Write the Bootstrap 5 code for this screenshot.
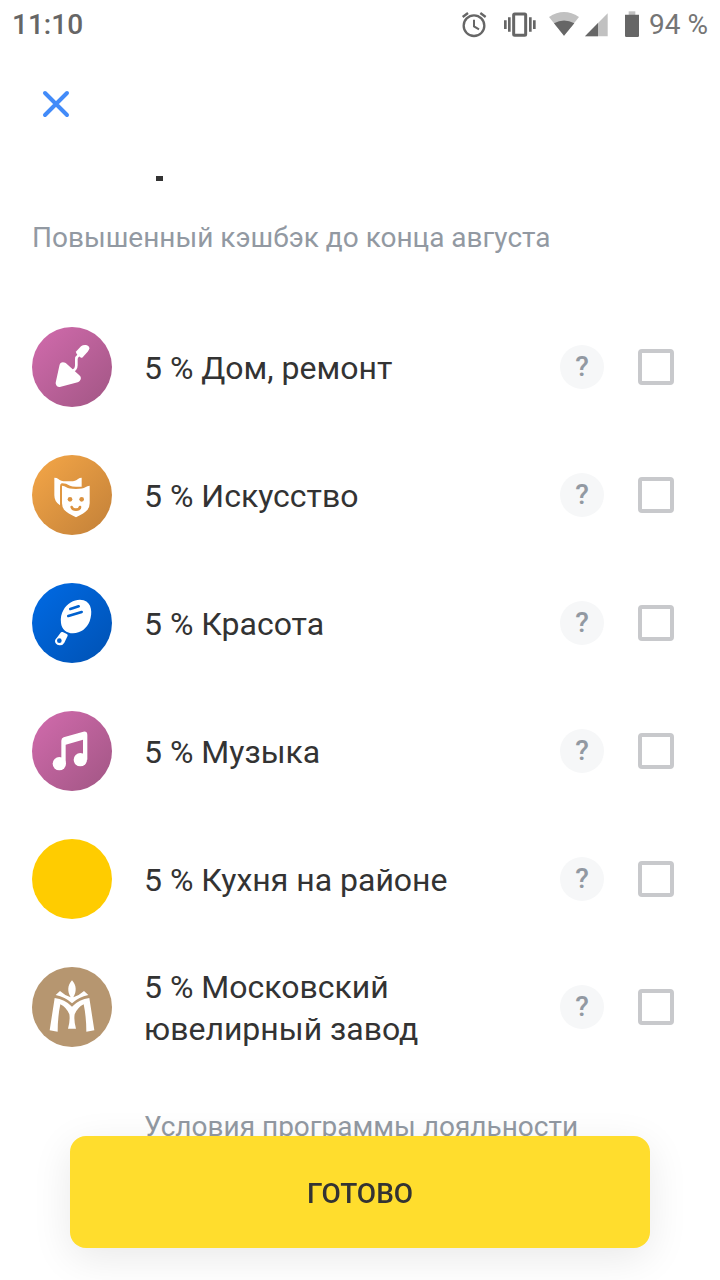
<!DOCTYPE html>
<html lang="ru">
<head>
<meta charset="utf-8">
<meta name="viewport" content="width=device-width, initial-scale=1">
<title>Повышенный кэшбэк</title>
<link href="https://cdn.jsdelivr.net/npm/bootstrap@5.3.0/dist/css/bootstrap.min.css" rel="stylesheet">
<style>
  body { font-family: Roboto, "Noto Sans", sans-serif; color: #333; background: #fff; }
  svg { display: block; flex: none; }
  .statusbar { height: 50px; padding: 0 12px; font-size: 28px; line-height: 32px; font-weight: 500; color: #666; }
  .statusbar .battery-level { font-weight: 400; color: #757575; margin-left: 8px; }
  .toolbar { height: 108px; padding: 0 32px; }
  .btn-dismiss { width: 48px; height: 48px; padding: 0; border: 0; background: none; }
  .title-strip { height: 58px; padding: 18px 156px; }
  .title-tail { width: 7px; height: 5px; background: #333; }
  .muted { color: #9299a2; font-size: 28px; line-height: 44px; }
  .offers { padding-top: 43px; }
  .offer { height: 128px; padding: 0 46px 0 32px; }
  .offer-name { font-size: 32px; line-height: 42px; margin-left: 32px; padding-top: 2px; }
  .btn-help { width: 44px; height: 44px; padding: 0; border: 0; border-radius: 50%; background: #f6f7f8; color: #9299a2; font-size: 28px; line-height: 44px; font-weight: 500; margin-right: 34px; }
  .offer .form-check-input { width: 36px; height: 36px; margin: 0; border: 4px solid #c8c9cc; border-radius: 4px; flex: none; }
  .terms { padding: 34px 32px 130px 144px; }
  .done-bar { padding: 0 70px 32px; }
  .btn-done { height: 112px; padding: 4px 0 0; border: 0; border-radius: 16px; background: #ffdd2d; color: #333; font-size: 28px; font-weight: 500; box-shadow: 0 10px 40px rgba(0,0,0,.09); }
  .btn-done:hover { background: #fcc521; }
</style>
</head>
<body>
<svg width="0" height="0" class="position-absolute" aria-hidden="true">
  <defs>
    <linearGradient id="pink" x1="0" y1="0" x2="1" y2="1"><stop offset=".1" stop-color="#cd69a9"/><stop offset=".9" stop-color="#a65888"/></linearGradient>
    <linearGradient id="orange" x1="0" y1="0" x2="1" y2="1"><stop offset=".1" stop-color="#f0a346"/><stop offset=".9" stop-color="#c7843a"/></linearGradient>
    <linearGradient id="blue" x1="0" y1="0" x2="1" y2="1"><stop offset=".1" stop-color="#0068e0"/><stop offset=".9" stop-color="#0054b8"/></linearGradient>
  </defs>
</svg>

<header>
  <div class="statusbar d-flex align-items-center">
    <span class="me-auto">11:10</span>
    <svg width="28" height="28" viewBox="30 32 84 84" fill="none" stroke="#666" stroke-width="7" aria-hidden="true"><circle cx="72" cy="76" r="31"/><path d="M72 58V78L87 87" stroke-width="6"/><path d="M38 50L54 38M91 38L107 50" stroke-width="7"/></svg>
    <svg class="ms-3" width="36" height="28" viewBox="162 32 108 84" fill="none" stroke="#666" stroke-width="8" aria-hidden="true"><rect x="191" y="41" width="36" height="64" rx="3" stroke-width="9"/><path d="M178 51V94M166 60V86M241 51V94M253 60V86"/></svg>
    <svg class="ms-2" width="32" height="28" viewBox="297 32 96 84" aria-hidden="true"><path d="M300 50Q345 20 390 50L345 106Z" fill="#c1c1c1"/><path d="M315 69Q345 52 376 69L345 106Z" fill="#666"/></svg>
    <svg class="ms-1" width="25" height="28" viewBox="405 32 75 84" aria-hidden="true"><path d="M408 108L476 39V108Z" fill="#c1c1c1"/><path d="M408 108L447 68V108Z" fill="#666"/></svg>
    <svg class="ms-2" width="24" height="28" viewBox="501 32 72 84" aria-hidden="true"><path d="M536 33H556V44H536Z" fill="#c1c1c1"/><path d="M525 43H567V106Q567 110 563 110H529Q525 110 525 106Z" fill="#666"/></svg>
    <span class="battery-level">94 %</span>
  </div>
  <div class="toolbar d-flex align-items-center">
    <button type="button" class="btn-dismiss d-flex align-items-center justify-content-center" aria-label="Закрыть">
      <svg width="28" height="28" viewBox="0 0 28 28" stroke="#428bf9" stroke-width="4" stroke-linecap="round"><path d="M3 3L25 25M25 3L3 25"/></svg>
    </button>
  </div>
  <div class="title-strip"><div class="title-tail"></div></div>
</header>

<main>
  <p class="muted m-0 px-4 mx-2">Повышенный кэшбэк до конца августа</p>
  <ul class="offers list-unstyled m-0">
    <li class="offer d-flex align-items-center">
      <svg width="80" height="80" viewBox="30 30 240 240" aria-hidden="true"><circle cx="150" cy="150" r="120" fill="url(#pink)"/><path d="M124 148L164 184L113 198Z" fill="#fff" stroke="#fff" stroke-width="24" stroke-linejoin="round"/><path d="M147 166L159 157Q163 153 163 145V127Q163 120 169 116L176 109" fill="none" stroke="#fff" stroke-width="8"/><path d="M163 103L177 88Q183 83 192 84Q202 86 202 94Q202 98 197 104L182 121Q179 124 175 121L165 112Q160 107 163 103Z" fill="#fff"/></svg>
      <label class="offer-name me-auto" for="offer1">5 % Дом, ремонт</label>
      <button type="button" class="btn-help" aria-label="Подробнее: Дом, ремонт">?</button>
      <input class="form-check-input" type="checkbox" id="offer1">
    </li>
    <li class="offer d-flex align-items-center">
      <svg width="80" height="80" viewBox="30 30 240 240" aria-hidden="true"><circle cx="150" cy="150" r="120" fill="url(#orange)"/><path d="M97 98Q105 98 109 102Q116 109 131 109H146Q161 109 168 102Q173 98 179 98V125H162Q150 125 144 122Q130 114 119 115Q114 116 114 125V181Q97 171 97 151Z" fill="#fff"/><path d="M120 122Q128 122 133 127Q140 132 162 132Q183 132 190 127Q196 122 203 122V175Q203 188 195 196Q188 205 162 217Q136 205 128 196Q120 188 120 175Z" fill="#fff"/><g fill="#db923f"><circle cx="144" cy="163" r="7"/><circle cx="179" cy="163" r="7"/></g><path d="M149 186Q151 194 162 194Q173 194 174 186" fill="none" stroke="#db923f" stroke-width="8" stroke-linecap="round"/></svg>
      <label class="offer-name me-auto" for="offer2">5 % Искусство</label>
      <button type="button" class="btn-help" aria-label="Подробнее: Искусство">?</button>
      <input class="form-check-input" type="checkbox" id="offer2">
    </li>
    <li class="offer d-flex align-items-center">
      <svg width="80" height="80" viewBox="30 30 240 240" aria-hidden="true"><circle cx="150" cy="150" r="120" fill="url(#blue)"/><path d="M124 112C137 87 165 76 185 82C210 90 212 120 203 145C195 166 176 181 153 181C133 181 119 168 117 150C115 135 118 122 124 112Z" fill="#fff"/><path d="M145 108L170 100M139 129L179 117" stroke="#0061cf" stroke-width="8" stroke-linecap="round"/><path d="M117 178Q119 176 122 177L133 182Q138 184 137 188L127 209Q122 218 112 217Q98 213 99 203Q100 199 104 195Z" fill="#fff"/><circle cx="112" cy="203" r="7" fill="#0061cf"/></svg>
      <label class="offer-name me-auto" for="offer3">5 % Красота</label>
      <button type="button" class="btn-help" aria-label="Подробнее: Красота">?</button>
      <input class="form-check-input" type="checkbox" id="offer3">
    </li>
    <li class="offer d-flex align-items-center">
      <svg width="80" height="80" viewBox="30 30 240 240" aria-hidden="true"><circle cx="150" cy="150" r="120" fill="url(#pink)"/><circle cx="112" cy="188" r="20" fill="#fff"/><circle cx="175" cy="176" r="20" fill="#fff"/><path d="M118 188V119Q118 111 125 109L184 92Q196 90 196 102V176H183V116L131 131V188Z" fill="#fff"/></svg>
      <label class="offer-name me-auto" for="offer4">5 % Музыка</label>
      <button type="button" class="btn-help" aria-label="Подробнее: Музыка">?</button>
      <input class="form-check-input" type="checkbox" id="offer4">
    </li>
    <li class="offer d-flex align-items-center">
      <svg width="80" height="80" viewBox="30 30 240 240" aria-hidden="true"><circle cx="150" cy="150" r="120" fill="#ffcc00"/></svg>
      <label class="offer-name me-auto" for="offer5">5 % Кухня на районе</label>
      <button type="button" class="btn-help" aria-label="Подробнее: Кухня на районе">?</button>
      <input class="form-check-input" type="checkbox" id="offer5">
    </li>
    <li class="offer d-flex align-items-center">
      <svg width="80" height="80" viewBox="30 30 240 240" aria-hidden="true"><circle cx="150" cy="150" r="120" fill="#b69670"/><g fill="#fff"><path d="M150 70C164 85 164 104 154 121Q172 115 186 102L199 114Q171 119 150 139Q129 119 101 114L114 102Q128 115 146 121C136 104 136 85 150 70Z"/><path d="M98 123Q128 126 150 149Q172 126 202 123L217 220L193 224Q193 180 185 142Q166 152 158 172Q155 190 162 215H138Q145 190 142 172Q134 152 115 142Q107 180 107 224L83 220Z"/></g></svg>
      <label class="offer-name me-auto" for="offer6">5 % Московский<br>ювелирный завод</label>
      <button type="button" class="btn-help" aria-label="Подробнее: Московский ювелирный завод">?</button>
      <input class="form-check-input" type="checkbox" id="offer6">
    </li>
  </ul>
  <div class="terms"><a href="#" class="muted text-decoration-none">Условия программы лояльности</a></div>
</main>

<div class="done-bar fixed-bottom">
  <button type="button" class="btn btn-done w-100">ГОТОВО</button>
</div>
<script src="https://cdn.jsdelivr.net/npm/bootstrap@5.3.0/dist/js/bootstrap.bundle.min.js"></script>
</body>
</html>
